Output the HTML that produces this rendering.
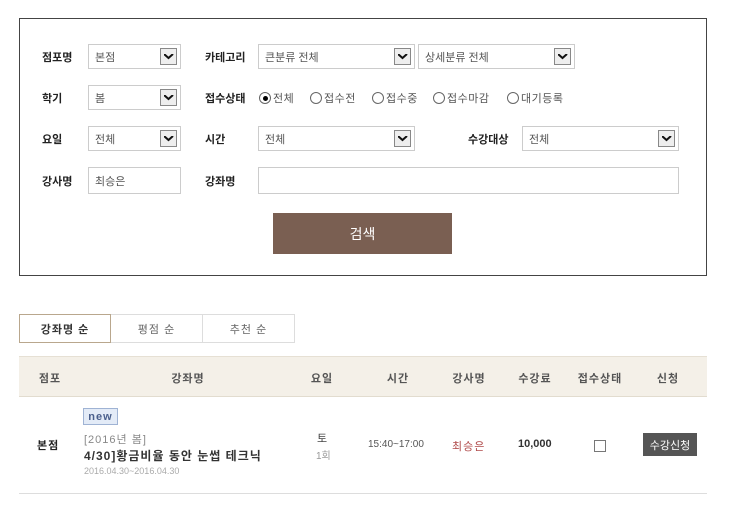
<!DOCTYPE html>
<html><head><meta charset="utf-8"><style>
*{margin:0;padding:0;box-sizing:border-box}
body{width:740px;height:507px;background:#fff;position:relative;font-family:"Liberation Sans","Noto Sans CJK KR","NanumGothic",sans-serif;font-size:11px;color:#333;overflow:hidden}
.a{position:absolute}
.box{left:19px;top:18px;width:688px;height:258px;border:1px solid #444}
.lb{font-weight:bold;font-size:11px;color:#222}
.sel{border:1px solid #ccc;background:#fff;color:#555;font-size:11px;padding-left:6px;display:flex;align-items:center}
.arr{position:absolute;right:3px;top:3px;width:17px;height:17px;border:1px solid #888;background:#eee;}
.arr svg{position:absolute;left:3px;top:5px}
.rad{position:absolute;width:12px;height:12px;border:1px solid #666;border-radius:50%;top:92px}
.rt{position:absolute;top:90px;color:#555;letter-spacing:0.5px}
.th{font-weight:bold;color:#555;font-size:11px;transform:translateX(-50%);top:370px;letter-spacing:1px}
</style></head><body>
<div class="a box"></div>
<svg width="0" height="0" style="position:absolute"><defs><g id="v"><path d="M0 0 L4.5 4 L9 0" stroke="#111" stroke-width="2" fill="none"/></g></defs></svg>

<div class="a lb" style="left:42px;top:49px">점포명</div>
<div class="a sel" style="left:88px;top:44px;width:93px;height:25px">본점<span class="arr"><svg width="10" height="6"><use href="#v"/></svg></span></div>
<div class="a lb" style="left:205px;top:49px">카테고리</div>
<div class="a sel" style="left:258px;top:44px;width:157px;height:25px">큰분류 전체<span class="arr"><svg width="10" height="6"><use href="#v"/></svg></span></div>
<div class="a sel" style="left:418px;top:44px;width:157px;height:25px">상세분류 전체<span class="arr"><svg width="10" height="6"><use href="#v"/></svg></span></div>

<div class="a lb" style="left:42px;top:90px">학기</div>
<div class="a sel" style="left:88px;top:85px;width:93px;height:25px">봄<span class="arr"><svg width="10" height="6"><use href="#v"/></svg></span></div>
<div class="a lb" style="left:205px;top:90px">접수상태</div>
<span class="rad" style="left:259px"><span style="position:absolute;left:2.5px;top:2.5px;width:5px;height:5px;background:#000;border-radius:50%"></span></span><span class="rt" style="left:273px">전체</span>
<span class="rad" style="left:310px"></span><span class="rt" style="left:324px">접수전</span>
<span class="rad" style="left:372px"></span><span class="rt" style="left:386px">접수중</span>
<span class="rad" style="left:433px"></span><span class="rt" style="left:447px">접수마감</span>
<span class="rad" style="left:507px"></span><span class="rt" style="left:521px">대기등록</span>

<div class="a lb" style="left:42px;top:131px">요일</div>
<div class="a sel" style="left:88px;top:126px;width:93px;height:25px">전체<span class="arr"><svg width="10" height="6"><use href="#v"/></svg></span></div>
<div class="a lb" style="left:205px;top:131px">시간</div>
<div class="a sel" style="left:258px;top:126px;width:157px;height:25px">전체<span class="arr"><svg width="10" height="6"><use href="#v"/></svg></span></div>
<div class="a lb" style="left:468px;top:131px">수강대상</div>
<div class="a sel" style="left:522px;top:126px;width:157px;height:25px">전체<span class="arr"><svg width="10" height="6"><use href="#v"/></svg></span></div>

<div class="a lb" style="left:42px;top:173px">강사명</div>
<div class="a sel" style="left:88px;top:167px;width:93px;height:27px">최승은</div>
<div class="a lb" style="left:205px;top:173px">강좌명</div>
<div class="a sel" style="left:258px;top:167px;width:421px;height:27px"></div>

<div class="a" style="left:273px;top:213px;width:179px;height:41px;background:#7a5f52;color:#fff;font-size:14px;display:flex;align-items:center;justify-content:center">검색</div>

<div class="a" style="left:19px;top:314px;width:92px;height:29px;border:1px solid #b9a78d;background:#fff;font-weight:bold;display:flex;align-items:center;justify-content:center;letter-spacing:1px;color:#333">강좌명 순</div>
<div class="a" style="left:111px;top:314px;width:92px;height:29px;border:1px solid #ddd;border-left:none;display:flex;align-items:center;justify-content:center;color:#666;letter-spacing:1px">평점 순</div>
<div class="a" style="left:203px;top:314px;width:92px;height:29px;border:1px solid #ddd;border-left:none;display:flex;align-items:center;justify-content:center;color:#666;letter-spacing:1px">추천 순</div>

<div class="a" style="left:19px;top:356px;width:688px;height:41px;background:#f4f0e8;border-top:1px solid #e6e0d4;border-bottom:1px solid #e2dccf"></div>
<div class="a th" style="left:50px">점포</div>
<div class="a th" style="left:188px">강좌명</div>
<div class="a th" style="left:322px">요일</div>
<div class="a th" style="left:398px">시간</div>
<div class="a th" style="left:469px">강사명</div>
<div class="a th" style="left:535px">수강료</div>
<div class="a th" style="left:600px">접수상태</div>
<div class="a th" style="left:668px">신청</div>

<div class="a lb" style="left:37px;top:437px;letter-spacing:1px">본점</div>
<div class="a" style="left:83px;top:408px;width:35px;height:17px;background:#e3ebf7;border:1px solid #9fb3d4;color:#4a5f8c;font-weight:bold;font-size:11px;display:flex;align-items:center;justify-content:center;letter-spacing:1px">new</div>
<div class="a" style="left:84px;top:431px;color:#888;letter-spacing:1px">[2016년 봄]</div>
<div class="a" style="left:84px;top:447px;font-weight:bold;color:#333;font-size:12px;letter-spacing:1px">4/30]황금비율 동안 눈썹 테크닉</div>
<div class="a" style="left:84px;top:466px;color:#aaa;font-size:9px">2016.04.30~2016.04.30</div>
<div class="a" style="left:317px;top:430px;color:#444">토</div>
<div class="a" style="left:316px;top:447px;color:#999;font-size:10px">1회</div>
<div class="a" style="left:368px;top:439px;color:#555;font-size:10px">15:40~17:00</div>
<div class="a" style="left:452px;top:438px;color:#b04a4a;letter-spacing:1px">최승은</div>
<div class="a" style="left:518px;top:438px;font-weight:bold;color:#333">10,000</div>
<div class="a" style="left:594px;top:440px;width:12px;height:12px;border:1px solid #777"></div>
<div class="a" style="left:643px;top:433px;width:54px;height:23px;background:#555;color:#fff;display:flex;align-items:center;justify-content:center">수강신청</div>
<div class="a" style="left:19px;top:493px;width:688px;height:1px;background:#ddd"></div>
</body></html>
